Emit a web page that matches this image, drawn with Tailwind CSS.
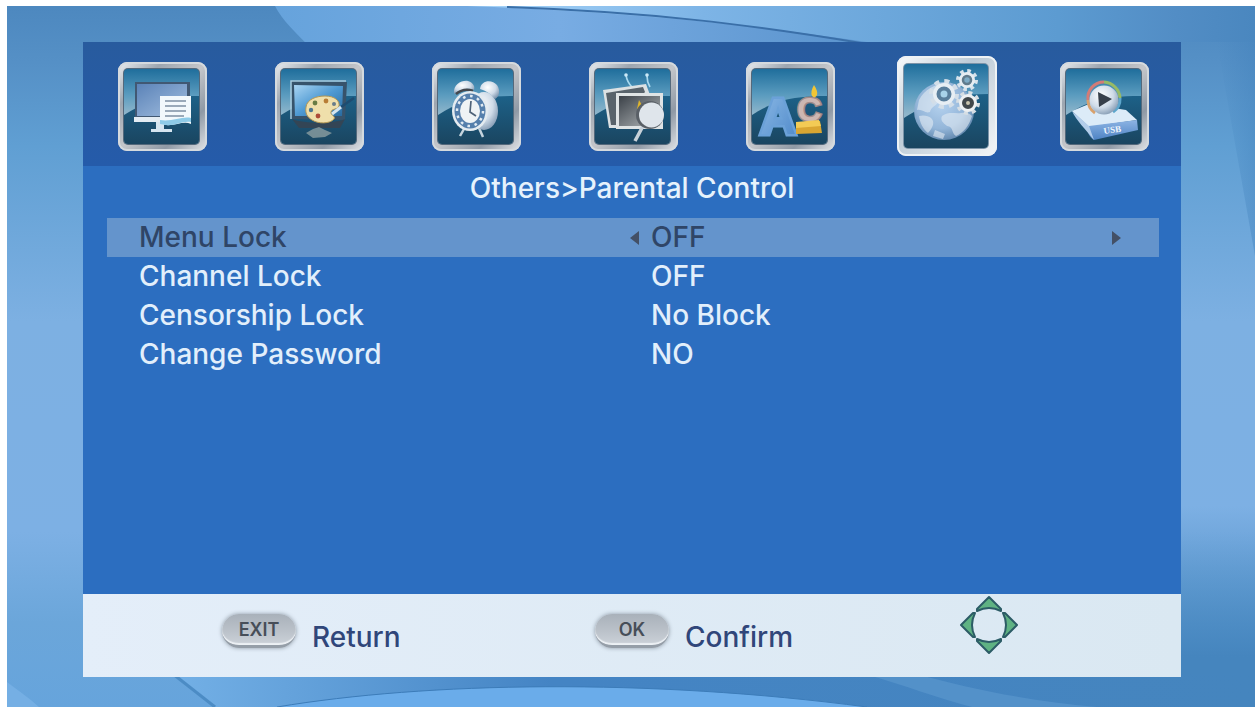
<!DOCTYPE html>
<html lang="en">
<head>
<meta charset="utf-8">
<meta name="viewport" content="width=device-width, initial-scale=1">
<title>Parental Control</title>
<script src="https://cdn.jsdelivr.net/npm/@tailwindcss/browser@4"></script>
</head>
<body class="bg-white font-['Inter','Liberation_Sans',sans-serif]">

<!-- Shared gradients and the framed tile behind every tab icon -->
<svg class="absolute size-0" aria-hidden="true">
  <defs>
    <linearGradient id="frame" x1="0" y1="0" x2="1" y2="1">
      <stop offset="0" stop-color="#eceff2"/><stop offset=".25" stop-color="#9da6b0"/><stop offset=".5" stop-color="#c4c6ca"/><stop offset=".75" stop-color="#8f99a5"/><stop offset="1" stop-color="#e3e5e8"/>
    </linearGradient>
    <linearGradient id="frameOn" x1="0" y1="0" x2="1" y2="1">
      <stop offset="0" stop-color="#fafcfd"/><stop offset=".4" stop-color="#bccad6"/><stop offset="1" stop-color="#f4f6f8"/>
    </linearGradient>
    <linearGradient id="sky" x1="0" y1="0" x2="0" y2="1">
      <stop offset="0" stop-color="#1f6e9c"/><stop offset=".35" stop-color="#5b9cbf"/><stop offset=".6" stop-color="#8fb6cb"/>
    </linearGradient>
    <linearGradient id="hill" x1="0" y1="0" x2="0" y2="1">
      <stop offset="0" stop-color="#1d6188"/><stop offset="1" stop-color="#1a4560"/>
    </linearGradient>
    <linearGradient id="screen" x1="0" y1="0" x2="1" y2="1">
      <stop offset="0" stop-color="#5b83b8"/><stop offset="1" stop-color="#a3bfe0"/>
    </linearGradient>
    <linearGradient id="glass" x1="0" y1="0" x2="1" y2="1">
      <stop offset="0" stop-color="#a9d4f2"/><stop offset=".5" stop-color="#4f9ad3"/><stop offset="1" stop-color="#286a9f"/>
    </linearGradient>
    <linearGradient id="dark" x1="0" y1="0" x2="1" y2="1">
      <stop offset="0" stop-color="#3b4148"/><stop offset="1" stop-color="#b4b9bb"/>
    </linearGradient>
    <linearGradient id="ice" x1="0" y1="0" x2="1" y2="1">
      <stop offset="0" stop-color="#8dbae6"/><stop offset="1" stop-color="#4d88c9"/>
    </linearGradient>
    <linearGradient id="drive" x1="0" y1="0" x2="0" y2="1">
      <stop offset="0" stop-color="#8db4e4"/><stop offset="1" stop-color="#4e83c4"/>
    </linearGradient>
    <radialGradient id="ball" cx=".4" cy=".35" r=".7">
      <stop offset="0" stop-color="#ffffff"/><stop offset=".6" stop-color="#cfdbe8"/><stop offset="1" stop-color="#8299b2"/>
    </radialGradient>
    <radialGradient id="globe" cx=".45" cy=".4" r=".62">
      <stop offset="0" stop-color="#b4d1ee"/><stop offset=".65" stop-color="#94b6d9"/><stop offset="1" stop-color="#6288ae"/>
    </radialGradient>
    <symbol id="tile" viewBox="0 0 89 89">
      <rect width="89" height="89" rx="9" fill="url(#frame)"/>
      <rect x="1" y="1" width="87" height="87" rx="8" fill="none" stroke="#d5dade" stroke-width="2"/>
      <rect x="5" y="6" width="77" height="77" rx="5" fill="#54697c"/>
      <rect x="6" y="7" width="75" height="75" rx="4" fill="url(#sky)"/>
      <path d="M6 53C24 42 38 34 81 34V78a4 4 0 0 1-4 4H10a4 4 0 0 1-4-4Z" fill="url(#hill)"/>
    </symbol>
    <symbol id="tileOn" viewBox="0 0 100 100">
      <rect width="100" height="100" rx="9" fill="url(#frameOn)"/>
      <rect x="1" y="1" width="98" height="98" rx="8" fill="none" stroke="#eef2f5" stroke-width="2"/>
      <rect x="6" y="7" width="86" height="86" rx="5" fill="#7b93a8"/>
      <rect x="7" y="8" width="84" height="84" rx="4" fill="url(#sky)"/>
      <path d="M7 62C24 52 44 38 91 38V88a4 4 0 0 1-4 4H11a4 4 0 0 1-4-4Z" fill="url(#hill)"/>
    </symbol>
  </defs>
</svg>

<div class="min-h-screen flex pt-[6px] pl-[7px] pr-[2px]">
<main class="relative isolate flex-1 flex flex-col pt-9 pb-[30px] pl-[76px] pr-[74px]">

  <!-- Sky blue wallpaper with sweeping curves -->
  <svg class="absolute inset-0 -z-10 size-full" viewBox="0 0 1248 701" preserveAspectRatio="none" aria-hidden="true">
    <defs>
      <linearGradient id="wall" x1="0" y1="0" x2="0" y2="1">
        <stop offset="0" stop-color="#4d88bf"/><stop offset=".08" stop-color="#5590c6"/><stop offset=".2" stop-color="#609fd3"/><stop offset=".45" stop-color="#7db0e2"/><stop offset=".75" stop-color="#7db0e4"/><stop offset=".88" stop-color="#6ba6da"/><stop offset="1" stop-color="#66a4dc"/>
      </linearGradient>
      <linearGradient id="wallTop" x1="0" y1="0" x2="1" y2="0">
        <stop offset="0" stop-color="#66a3dc"/><stop offset=".45" stop-color="#78ace3"/><stop offset="1" stop-color="#5690ca"/>
      </linearGradient>
      <linearGradient id="wallArc" x1="0" y1="0" x2="1" y2="0">
        <stop offset="0" stop-color="#a9d6fa"/><stop offset=".3" stop-color="#7db4e6"/><stop offset=".75" stop-color="#5c9bd1"/><stop offset=".9" stop-color="#528dc5"/><stop offset="1" stop-color="#4a87bf"/>
      </linearGradient>
      <linearGradient id="wallLow" x1="0" y1="0" x2="1" y2="0">
        <stop offset="0" stop-color="#73b0e6"/><stop offset=".35" stop-color="#4484c4"/><stop offset="1" stop-color="#4585be"/>
      </linearGradient>
      <linearGradient id="wallRight" x1="0" y1="0" x2="0" y2="1">
        <stop offset="0" stop-color="#4585be" stop-opacity="0"/><stop offset=".75" stop-color="#4585be"/>
      </linearGradient>
      <linearGradient id="wallSide" x1="0" y1="0" x2="1" y2="0">
        <stop offset="0" stop-color="#3f7fba" stop-opacity="0"/><stop offset="1" stop-color="#3f7fba" stop-opacity=".4"/>
      </linearGradient>
    </defs>
    <rect width="1248" height="701" fill="url(#wall)"/>
    <path d="M268 0C275 14 290 28 302 40H900V0Z" fill="url(#wallTop)"/>
    <path d="M460 0C620 6 740 18 860 36H1248V0Z" fill="url(#wallArc)"/>
    <path d="M500 1C640 6 740 18 860 38" fill="none" stroke="#3a6fa8" stroke-width="2"/>
    <path d="M1210 36H1248V250Z" fill="url(#wallSide)"/>
    <path d="M1172 500H1248V701H1172Z" fill="url(#wallRight)"/>
    <path d="M0 676C12 685 22 692 32 701H0Z" fill="#75afe4"/>
    <path d="M166 668L208 701H1248V668Z" fill="url(#wallLow)"/>
    <path d="M166 668L208 701" stroke="#4c8cc5" stroke-width="3"/>
    <path d="M270 701C420 676 640 672 860 701Z" fill="#6aacea"/>
    <path d="M270 701C420 676 640 672 860 701" fill="none" stroke="#3c7cb9" stroke-width="1"/>
    <path d="M858 668C900 680 930 692 965 701H1090C1020 695 960 682 910 668Z" fill="#5391c9"/>
  </svg>

  <section class="flex-1 flex flex-col bg-[#2c6ec0]">

    <nav aria-label="Settings" class="flex justify-between items-center bg-linear-to-b from-[#285b9e] to-[#255baa] pt-3.5 pb-2.5 pl-[29px] pr-[27px]">
      <button class="size-[100px] grid place-items-center" aria-label="Channel list">
        <svg class="size-[89px]" viewBox="0 0 89 89">
          <use href="#tile"/>
          <path d="M17 20H72V58H17Z" fill="#415873"/>
          <path d="M19 22H69V54H19Z" fill="url(#screen)"/>
          <path d="M16 55H55V60H16Z" fill="#e3ecf3"/>
          <path d="M38 60H46V67H54V70H33V67H38Z" fill="#d5e5f0"/>
          <path d="M42 34H73V62C64 58 56 66 42 62Z" fill="#f2f8fc"/>
          <path d="M42 62C56 66 64 58 73 60V56C64 54 54 60 42 58Z" fill="#8ecbe8"/>
          <path d="M47 39H68M47 44H68M47 49H68M47 54H66" stroke="#7d8ea3" stroke-width="1.6"/>
        </svg>
      </button>
      <button class="size-[100px] grid place-items-center" aria-label="Picture">
        <svg class="size-[89px]" viewBox="0 0 89 89">
          <use href="#tile"/>
          <path d="M16 19L72 20L70 58L17 57Z" fill="#37536b"/>
          <path d="M16 57V19H71" fill="none" stroke="#a8cadd" stroke-width="1.5"/>
          <path d="M19 23L68 24L67 54L20 54Z" fill="url(#glass)"/>
          <path d="M17 57C30 62 58 62 70 57L65 66H24Z" fill="#334555"/>
          <path d="M31 71L38 67L44 65L50 68L57 71L50 75L38 76Z" fill="#a6b0ae" opacity=".65"/>
          <path d="M31 45C32 37 42 34 50 34C60 34 65 39 64 44C63 48 57 46 56 50C55 53 61 54 59 57C55 62 43 62 37 58C32 55 30 51 31 45Z" fill="#efdfab" stroke="#b39653" stroke-width="1"/>
          <circle cx="40" cy="41" r="2.4" fill="#687c44"/><circle cx="51" cy="39" r="2.4" fill="#b87d35"/><circle cx="36" cy="48" r="2.2" fill="#4c7690"/><circle cx="43" cy="54" r="2.4" fill="#ad4b38"/><circle cx="59" cy="42" r="2" fill="#687d8a"/>
          <path d="M79 36L66 45" stroke="#1e4c71" stroke-width="2.5"/><path d="M66 45L57 52" stroke="#d5e5ef" stroke-width="3"/>
        </svg>
      </button>
      <button class="size-[100px] grid place-items-center" aria-label="Time">
        <svg class="size-[89px]" viewBox="0 0 89 89">
          <use href="#tile"/>
          <path d="M32 67L28 74M47 66L51 75" stroke="#c5d4de" stroke-width="2.5"/>
          <ellipse cx="52" cy="49" rx="14" ry="19" fill="url(#ball)"/>
          <path d="M22 32C21 22 30 18 36 19C42 21 43 25 42 28C34 25 28 28 22 32Z" fill="url(#ball)"/>
          <path d="M24 32C30 27 36 27 41 29" stroke="#44484e" stroke-width="2.5" fill="none"/>
          <path d="M48 27C49 18 60 17 65 23C69 29 67 35 63 37C58 31 54 29 48 27Z" fill="url(#ball)"/>
          <ellipse cx="38" cy="49" rx="18" ry="20" fill="#e4ebf0"/>
          <ellipse cx="38" cy="49" rx="15.500" ry="17.500" fill="#557fac"/>
          <ellipse cx="38" cy="49" rx="13" ry="15" fill="none" stroke="#e2ebf2" stroke-width="2.500" stroke-dasharray="2.600 4.700"/>
          <ellipse cx="38" cy="49" rx="10" ry="12" fill="#eff3f5"/>
          <path d="M39 39L38 50L44 54" fill="none" stroke="#4e6278" stroke-width="1.700"/>
        </svg>
      </button>
      <button class="size-[100px] grid place-items-center" aria-label="Option">
        <svg class="size-[89px]" viewBox="0 0 89 89">
          <use href="#tile"/>
          <path d="M37 13Q38 20 43 25M58 14Q58 20 61 25" fill="none" stroke="#a9d9ef" stroke-width="1.700"/>
          <circle cx="37" cy="13" r="1.800" fill="#cbe9f7"/><circle cx="58" cy="13" r="1.800" fill="#cbe9f7"/>
          <path d="M14 28L57 22L61 33L30 66L20 66Z" fill="#dce1e3"/>
          <path d="M17 31L54 25L56 30L27 63L22 63Z" fill="#59636b"/>
          <rect x="27" y="31" width="47" height="36" fill="#e0e4e5"/>
          <rect x="30" y="34" width="41" height="30" fill="url(#dark)"/>
          <path d="M50 38L54 45L48 47Z" fill="#dfb52b"/>
          <path d="M54 64L46 79" stroke="#c7d1d9" stroke-width="3.500"/>
          <circle cx="61" cy="53" r="14" fill="#5a6067"/><circle cx="62.500" cy="53" r="12.500" fill="#dfe5eb"/>
        </svg>
      </button>
      <button class="size-[100px] grid place-items-center" aria-label="Language">
        <svg class="size-[89px]" viewBox="0 0 89 89">
          <use href="#tile"/>
          <g font-family="Liberation Sans, sans-serif" font-weight="700">
            <text x="14" y="72" font-size="50" fill="url(#ice)" stroke="#6ba1d8" stroke-width="5" paint-order="stroke">A</text>
            <text x="51" y="59" font-size="34" fill="#cdb7b2" stroke="#a18a88" stroke-width="3" paint-order="stroke">C</text>
          </g>
          <path d="M50 61L74 59L76 71L50 72Z" fill="#d9a632"/><path d="M50 60L73 58L75 64L50 66Z" fill="#f3cb55"/>
          <path d="M68 23Q64 30 66 34Q69 37 71 33Q72 29 68 23Z" fill="#f1c535"/>
        </svg>
      </button>
      <button class="size-[100px]" aria-label="Others" aria-current="page">
        <svg class="size-full" viewBox="0 0 100 100">
          <use href="#tileOn"/>
          <ellipse cx="47" cy="55" rx="30" ry="29" fill="url(#globe)"/>
          <path d="M22 44C28 32 40 27 50 28C55 34 50 42 44 42C42 49 34 50 33 56C28 58 26 53 20 54ZM22 60C30 58 38 62 36 69C34 74 32 76 31 77C26 73 23 67 22 60ZM45 60C52 55 58 58 64 57C70 56 73 58 75 60C72 70 66 77 59 80C54 77 57 71 50 70C46 67 43 64 45 60ZM38 74L48 78L46 83L36 80Z" fill="#e2ebf3" opacity=".6"/>
          <g fill="none">
            <circle cx="47" cy="38" r="12.500" stroke="#d3dee8" stroke-width="5" stroke-dasharray="4.900 4.900"/>
            <circle cx="47" cy="38" r="8.500" stroke="#e7eef4" stroke-width="5"/>
            <circle cx="47" cy="38" r="5.500" stroke="#597e9c" stroke-width="4" fill="#a8d2ea"/>
            <circle cx="70" cy="24" r="9" stroke="#d6e2eb" stroke-width="4" stroke-dasharray="3.500 3.560"/>
            <circle cx="70" cy="24" r="6" stroke="#e6edf2" stroke-width="4"/>
            <circle cx="70" cy="24" r="4" stroke="#607b8c" stroke-width="2.500" fill="#7dabc5"/>
            <circle cx="71" cy="47" r="10" stroke="#d6dee4" stroke-width="4" stroke-dasharray="3.900 3.950"/>
            <circle cx="71" cy="47" r="7" stroke="#edf0f2" stroke-width="4"/>
            <circle cx="71" cy="47" r="4" stroke="#40474b" stroke-width="4" fill="#c8c3ac"/>
          </g>
        </svg>
      </button>
      <button class="size-[100px] grid place-items-center" aria-label="USB media">
        <svg class="size-[89px]" viewBox="0 0 89 89">
          <use href="#tile"/>
          <path d="M12 49L29 42L66 48L77 58L29 65Z" fill="#dcebf8"/>
          <path d="M29 64L77 58L78 68L34 78C29 75 26 69 29 64Z" fill="url(#drive)"/>
          <path d="M12 49L29 64L34 78C26 68 16 58 12 49Z" fill="#b3cdea"/>
          <path d="M28 38A16 16 0 0 1 44 20" fill="none" stroke="#d47b76" stroke-width="3"/>
          <path d="M44 20A17 17 0 0 1 60 36" fill="none" stroke="#98ba65" stroke-width="3"/>
          <path d="M60 36A16 16 0 0 1 53 50" fill="none" stroke="#5da6cc" stroke-width="3"/>
          <path d="M28 38A16 16 0 0 0 35 51" fill="none" stroke="#d8a16d" stroke-width="3"/>
          <circle cx="44" cy="38" r="14.500" fill="url(#ball)"/>
          <path d="M38 30L52 37L39 45Z" fill="#37404b"/>
          <text x="44" y="72" font-family="Liberation Serif, serif" font-weight="700" font-size="9" fill="#f0f6fd" transform="rotate(-8 44 72)">USB</text>
        </svg>
      </button>
    </nav>

    <h1 class="h-[52px] pb-2 flex items-center justify-center text-[28px] font-medium text-[#e6f2fc]">Others&gt;Parental Control</h1>

    <ul class="flex flex-col pl-6 pr-[22px] text-[28px] leading-[39px] font-medium text-[#e2effb]">
      <li class="grid grid-cols-2 items-center h-[39px] pl-8 pr-[38px] bg-[#6494cc] text-[#2f4567]">
        <span id="menu-lock">Menu Lock</span>
        <div class="flex items-center gap-3" role="group" aria-labelledby="menu-lock">
          <button aria-label="Previous value"><svg class="w-[9px] h-3.5" viewBox="0 0 9 14"><path d="M9 0V14L0 7Z" fill="#435066"/></svg></button>
          <output class="flex-1">OFF</output>
          <button aria-label="Next value"><svg class="w-[9px] h-3.5" viewBox="0 0 9 14"><path d="M0 0V14L9 7Z" fill="#435066"/></svg></button>
        </div>
      </li>
      <li><button class="w-full grid grid-cols-2 items-center h-[39px] pl-8 pr-[38px] text-left"><span>Channel Lock</span><span class="pl-[21px]">OFF</span></button></li>
      <li><button class="w-full grid grid-cols-2 items-center h-[39px] pl-8 pr-[38px] text-left"><span>Censorship Lock</span><span class="pl-[21px]">No Block</span></button></li>
      <li><button class="w-full grid grid-cols-2 items-center h-[39px] pl-8 pr-[38px] text-left"><span>Change Password</span><span class="pl-[21px]">NO</span></button></li>
    </ul>

    <footer class="mt-auto h-[83px] grid grid-cols-[373fr_364fr_222fr] pl-[139px] bg-linear-to-r from-[#e4eef9] to-[#dae8f2] text-[28px] leading-[39px] font-medium text-[#30467a]">
      <div class="flex items-start gap-4 pt-5">
        <button id="exit" class="w-[74px] h-[34px] rounded-full bg-linear-to-b from-[#a9b1ba] via-[#b9c0c8] to-[#ccd2d9] border-b-3 border-[#959ea8] shadow-[0_0_4px_#8d98a4,inset_0_-2px_1px_#edf1f5] text-[18px] leading-none font-semibold text-[#474e58]">EXIT</button>
        <label for="exit" class="pt-1">Return</label>
      </div>
      <div class="flex items-start gap-4 pt-5">
        <button id="ok" class="w-[74px] h-[34px] rounded-full bg-linear-to-b from-[#a9b1ba] via-[#b9c0c8] to-[#ccd2d9] border-b-3 border-[#959ea8] shadow-[0_0_4px_#8d98a4,inset_0_-2px_1px_#edf1f5] text-[18px] leading-none font-semibold text-[#474e58]">OK</button>
        <label for="ok" class="pt-1">Confirm</label>
      </div>
      <svg class="size-[60px] mt-px" viewBox="0 0 60 60" role="img" aria-label="Navigate">
        <g fill="#5fb283" stroke="#2c5c66" stroke-width="2" stroke-linejoin="round">
          <path id="up" d="M30 2L42 14V16Q30 10 18 16V14Z"/>
          <use href="#up" transform="rotate(90 30 30)"/>
          <use href="#up" transform="rotate(180 30 30)"/>
          <use href="#up" transform="rotate(270 30 30)"/>
        </g>
      </svg>
    </footer>
  </section>
</main>
</div>
</body>
</html>
